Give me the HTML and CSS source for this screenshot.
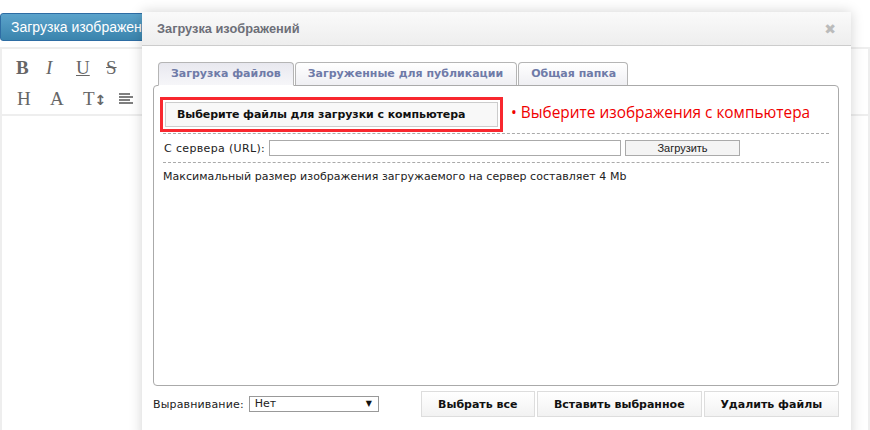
FILE: index.html
```html
<!DOCTYPE html>
<html>
  <head>
    <meta charset="UTF-8">
    <title>Загрузка изображений</title>
    <link rel="stylesheet" href="styles.css">
  </head>
  <body>
    <div class="page">
      <button class="open-btn">Загрузка изображений</button>
      <div class="editor">
        <div class="toolbar">
          <div class="tool-row tool-row-top">
            <span class="tool tool-b">B</span>
            <span class="tool tool-i">I</span>
            <span class="tool tool-u">U</span>
            <span class="tool tool-s">S</span>
          </div>
          <div class="tool-row">
            <span class="tool">H</span>
            <span class="tool">A</span>
            <span class="tool">T<small>↕</small></span>
            <svg class="tool-icon" width="14" height="12" viewBox="0 0 14 12">
              <path d="M0 1h11M0 4h14M0 7h11M0 10h14" stroke="#555" stroke-width="1.6"/>
            </svg>
          </div>
        </div>
      </div>
    </div>

    <div class="modal">
      <div class="modal-head">
        <h3>Загрузка изображений</h3>
        <span class="close">✖</span>
      </div>
      <div class="modal-body">
        <ul class="tabs">
          <li class="active">Загрузка файлов</li>
          <li class="tab-loaded">Загруженные для публикации</li>
          <li class="tab-shared">Общая папка</li>
        </ul>
        <div class="panel">
          <div class="pick-row">
            <div class="pick-frame">
              <button class="pick-btn">Выберите файлы для загрузки с компьютера</button>
            </div>
            <span class="hint">• Выберите изображения с компьютера</span>
          </div>
          <div class="url-row">
            <label for="url">С сервера (URL):</label>
            <input type="text" id="url">
            <button class="url-btn">Загрузить</button>
          </div>
          <p class="note">Максимальный размер изображения загружаемого на сервер составляет 4 Mb</p>
        </div>
        <div class="foot">
          <label class="foot-label">Выравнивание:</label>
          <div class="select">Нет<span class="arrow">▼</span></div>
          <div class="foot-btns">
            <button class="foot-btn btn-all">Выбрать все</button>
            <button class="foot-btn btn-insert">Вставить выбранное</button>
            <button class="foot-btn btn-del">Удалить файлы</button>
          </div>
        </div>
      </div>
    </div>
  </body>
</html>
```

FILE: styles.css
```css
html, body {
  height: 100%;
}

body {
  margin: 0;
  background-color: #fff;
  overflow: hidden;
  font-family: "DejaVu Sans", Verdana, sans-serif;
}

.page {
  padding-top: 13px;
}

.open-btn {
  display: block;
  width: 170px;
  height: 28px;
  padding: 0 0 0 10px;
  border: 1px solid #2e6da4;
  border-radius: 3px;
  background: linear-gradient(#5ba3cb, #3a84ad);
  color: #fff;
  font-family: "Liberation Sans", sans-serif;
  font-size: 14px;
  text-align: left;
  white-space: nowrap;
  overflow: hidden;
}

.editor {
  margin-top: 6px;
  height: 400px;
  border: 2px solid #eee;
}

.toolbar {
  height: 67px;
  padding-top: 3px;
  box-sizing: border-box;
  border-bottom: 2px solid #eee;
}

.tool-row {
  display: flex;
  align-items: center;
  height: 31px;
  padding-left: 15px;
}

.tool-row-top {
  padding-left: 14px;
}

.tool {
  width: 33px;
  font-family: "Liberation Serif", serif;
  font-size: 19px;
  color: #666;
}

.tool-row-top .tool {
  width: 30px;
}

.tool small {
  font-family: "DejaVu Sans", sans-serif;
  font-size: 14px;
  font-weight: bold;
}

.tool-b {
  font-weight: bold;
}

.tool-i {
  font-style: italic;
}

.tool-u {
  text-decoration: underline;
}

.tool-s {
  text-decoration: line-through;
}

.tool-icon {
  margin-left: 3px;
}

.modal {
  position: absolute;
  left: 142px;
  top: 12px;
  width: 709px;
  height: 430px;
  background-color: #fff;
  box-shadow: 0 0 12px rgba(0, 0, 0, 0.18);
}

.modal-head {
  display: flex;
  justify-content: space-between;
  align-items: center;
  height: 34px;
  padding: 0 15px;
  box-sizing: border-box;
  background: linear-gradient(#fafafa, #eee);
  border-bottom: 1px solid #ccc;
}

.modal-head h3 {
  margin: 0;
  font-family: "Liberation Sans", sans-serif;
  font-size: 12.8px;
  font-weight: bold;
  color: #6d6f78;
}

.close {
  font-size: 14px;
  color: #bbb;
}

.modal-body {
  padding: 16px 12px 0 11px;
}

.tabs {
  display: flex;
  gap: 1px;
  list-style: none;
  margin: 0 0 -1px 5px;
  padding: 0;
}

.tabs li {
  height: 22px;
  padding: 0 12px;
  line-height: 22px;
  border: 1px solid #b5b5b5;
  border-bottom: none;
  border-radius: 4px 4px 0 0;
  background: linear-gradient(#fff, #efeff3);
  color: #6f7ba8;
  font-size: 11px;
  font-weight: bold;
}

.tabs li.active {
  background: linear-gradient(#e8e8ef, #f6f6f9);
  position: relative;
  z-index: 1;
  border-bottom: 1px solid #fff;
}

.tabs li.tab-loaded {
  padding-right: 13px;
}

.tabs li.tab-shared {
  padding-right: 11px;
}

.panel {
  height: 301px;
  padding: 10px 9px 0 6px;
  box-sizing: border-box;
  border: 1px solid #aaa;
  border-radius: 4px;
}

.pick-row {
  display: flex;
  align-items: center;
  height: 37px;
  border-bottom: 1px dashed #aaa;
  margin-left: 3px;
}

.pick-frame {
  margin-left: -3px;
  padding: 2px;
  border: 3px solid #f8282f;
}

.pick-btn {
  display: block;
  width: 333px;
  height: 25px;
  padding: 0 0 0 11px;
  border: 1px solid #ccc;
  background: #f8f8f8;
  color: #111;
  font-family: "DejaVu Sans", sans-serif;
  font-size: 11px;
  font-weight: bold;
  letter-spacing: -0.07px;
  text-align: left;
}

.hint {
  margin: -4px 0 0 8px;
  font-family: "Open Sans", sans-serif;
  font-size: 15.4px;
  color: #f00000;
}

.url-row {
  display: flex;
  align-items: center;
  height: 28px;
  margin-left: 3px;
  border-bottom: 1px dashed #aaa;
  font-size: 11px;
  color: #222;
}

.url-row label {
  width: 105px;
  padding-left: 1px;
  letter-spacing: 0.35px;
}

.url-row input {
  width: 352px;
  height: 16px;
  padding: 0;
  box-sizing: border-box;
  border: 1px solid #aaa;
}

.url-btn {
  width: 115px;
  height: 16px;
  margin-left: 4px;
  padding: 0;
  border: 1px solid #aaa;
  background: #f4f4f4;
  font-family: "Liberation Sans", sans-serif;
  font-size: 11px;
  color: #222;
}

.note {
  margin: 7px 0 0 3px;
  font-size: 11px;
  letter-spacing: 0.04px;
  color: #222;
}

.foot {
  display: flex;
  align-items: center;
  height: 26px;
  margin-top: 5px;
  font-size: 11px;
  color: #222;
}

.foot-label {
  letter-spacing: 0.15px;
}

.select {
  display: flex;
  justify-content: space-between;
  width: 130px;
  height: 16px;
  margin-left: 5px;
  padding: 0 6px 0 5px;
  box-sizing: border-box;
  line-height: 14px;
  border: 1px solid #999;
}

.arrow {
  font-size: 8px;
  color: #111;
}

.foot-btns {
  display: flex;
  gap: 2px;
  margin-left: 42px;
}

.foot-btn {
  height: 26px;
  padding: 0;
  border: 1px solid #ddd;
  background: linear-gradient(#fff, #f2f2f2);
  color: #111;
  font-family: "DejaVu Sans", sans-serif;
  font-size: 11px;
  font-weight: bold;
}

.btn-all {
  width: 114px;
}

.btn-insert {
  width: 165px;
}

.btn-del {
  width: 135px;
}
```
